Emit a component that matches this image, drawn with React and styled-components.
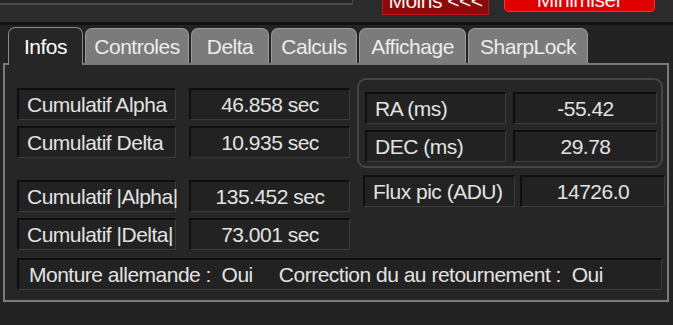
import React from 'react';
import styled, { createGlobalStyle } from 'styled-components';

const Global = createGlobalStyle`
  body {
    margin: 0;
    background: #222222;
    font-family: "Liberation Sans", Arial, sans-serif;
  }
`;

const Window = styled.div`
  width: 673px;
  height: 325px;
  overflow: hidden;
  background: #232323;
  color: #e2e2e2;
  font-size: 21px;
  letter-spacing: -0.5px;
`;

const TopBar = styled.div`
  height: 22px;
  display: flex;
  align-items: flex-start;
  background: #2b2b2b;
  border-bottom: 3px solid #121212;
  overflow: hidden;
`;

const TopField = styled.div`
  width: 352px;
  height: 3px;
  background: #262626;
  border-bottom: 2px solid #4a4a4a;
  border-right: 1px solid #4a4a4a;
`;

const RedButton = styled.div`
  display: flex;
  align-items: flex-end;
  justify-content: center;
  box-sizing: border-box;
  width: ${({w}) => w}px;
  margin-left: ${({ml}) => ml}px;
  height: ${({h}) => h}px;
  padding-bottom: ${({bright}) => bright ? 1 : 3}px;
  line-height: 1;
  color: #f2f2f2;
  background: ${({bright}) => bright ? '#e10000' : '#8c0a0a'};
  border: 1px solid ${({bright}) => bright ? '#ff3030' : '#b81818'};
  border-top: none;
  border-radius: ${({bright}) => bright ? '0 0 5px 5px' : '0'};
`;

const Tabs = styled.div`
  display: flex;
  align-items: flex-end;
  height: 38px;
  padding-left: 8px;
  gap: 2px;
`;

const Tab = styled.div`
  box-sizing: border-box;
  width: ${({w}) => w}px;
  height: ${({active}) => active ? 38 : 35}px;
  display: flex;
  align-items: center;
  justify-content: center;
  padding-top: ${({active}) => active ? 0 : 2}px;
  border: 1px solid ${({active}) => active ? '#8a8a8a' : '#9a9a9a'};
  border-bottom: none;
  border-radius: 7px 7px 0 0;
  background: ${({active}) => active ? '#262626' : '#7b7b7b'};
  color: ${({active}) => active ? '#ffffff' : '#ececec'};
  margin-bottom: ${({active}) => active ? -2 : 0}px;
  position: relative;
  z-index: ${({active}) => active ? 1 : 0};
`;

const Panel = styled.div`
  box-sizing: border-box;
  width: 666px;
  height: 239px;
  margin-left: 3px;
  background: #262626;
  border: 2px solid #7a7a7a;
  padding: 13px 0 0 12px;
`;

const Section = styled.div`
  display: flex;
  align-items: ${({align}) => align};
  height: ${({h}) => h}px;
  margin-top: ${({mt}) => mt || 0}px;
`;

const Pair = styled.div`
  display: flex;
  flex-direction: column;
  gap: 6px;
  margin-top: ${({mt}) => mt || 0}px;
`;

const Row = styled.div`
  display: flex;
  gap: ${({gap}) => gap}px;
  margin-left: ${({ml}) => ml || 0}px;
`;

const Cell = styled.div`
  box-sizing: border-box;
  width: ${({w}) => w}px;
  height: 32px;
  display: flex;
  align-items: center;
  justify-content: ${({center}) => center ? 'center' : 'flex-start'};
  padding-left: ${({center}) => center ? 0 : 8}px;
  background: #222222;
  border-top: 2px solid #0e0e0e;
  border-left: 2px solid #0e0e0e;
  border-bottom: 1px solid #3c3c3c;
  border-right: 1px solid #3c3c3c;
  white-space: nowrap;
`;

const Frame = styled.div`
  box-sizing: border-box;
  width: 306px;
  height: 90px;
  margin-left: 7px;
  padding: 12px 0 0 6px;
  border: 2px solid #454545;
  border-radius: 9px;
`;

const Bar = styled(Cell)`
  width: 645px;
  margin-top: 8px;
  padding-left: 10px;
`;

const Gap = styled.span`
  display: inline-block;
  width: ${({w}) => w}px;
`;

const tabs = [
  ['Infos', 75],
  ['Controles', 104],
  ['Delta', 78],
  ['Calculs', 86],
  ['Affichage', 107],
  ['SharpLock', 120],
];

function Line({ label, value, lw, vw, gap }) {
  return (
    <Row gap={gap}>
      <Cell w={lw}>{label}</Cell>
      <Cell w={vw} center>{value}</Cell>
    </Row>
  );
}

export default function App() {
  return (
    <Window>
      <Global />
      <TopBar>
        <TopField />
        <RedButton w={107} ml={29} h={15}>Moins &lt;&lt;&lt;</RedButton>
        <RedButton w={151} ml={15} h={12} bright>Minimiser</RedButton>
      </TopBar>
      <Tabs>
        {tabs.map(([t, w], i) => (
          <Tab key={t} w={w} active={i === 0}>{t}</Tab>
        ))}
      </Tabs>
      <Panel>
        <Section h={90} align="center">
          <Pair>
            <Line label="Cumulatif Alpha" value="46.858 sec" lw={159} vw={161} gap={13} />
            <Line label="Cumulatif Delta" value="10.935 sec" lw={159} vw={161} gap={13} />
          </Pair>
          <Frame>
            <Pair>
              <Line label="RA (ms)" value="-55.42" lw={141} vw={144} gap={7} />
              <Line label="DEC (ms)" value="29.78" lw={141} vw={144} gap={7} />
            </Pair>
          </Frame>
        </Section>
        <Section align="flex-start" mt={7}>
          <Pair mt={5}>
            <Line label="Cumulatif |Alpha|" value="135.452 sec" lw={159} vw={161} gap={13} />
            <Line label="Cumulatif |Delta|" value="73.001 sec" lw={159} vw={161} gap={13} />
          </Pair>
          <Row gap={5} ml={13}>
            <Cell w={152}>Flux pic (ADU)</Cell>
            <Cell w={145} center>14726.0</Cell>
          </Row>
        </Section>
        <Bar>
          Monture allemande :&nbsp; Oui<Gap w={26} />Correction du au retournement :&nbsp; Oui
        </Bar>
      </Panel>
    </Window>
  );
}
